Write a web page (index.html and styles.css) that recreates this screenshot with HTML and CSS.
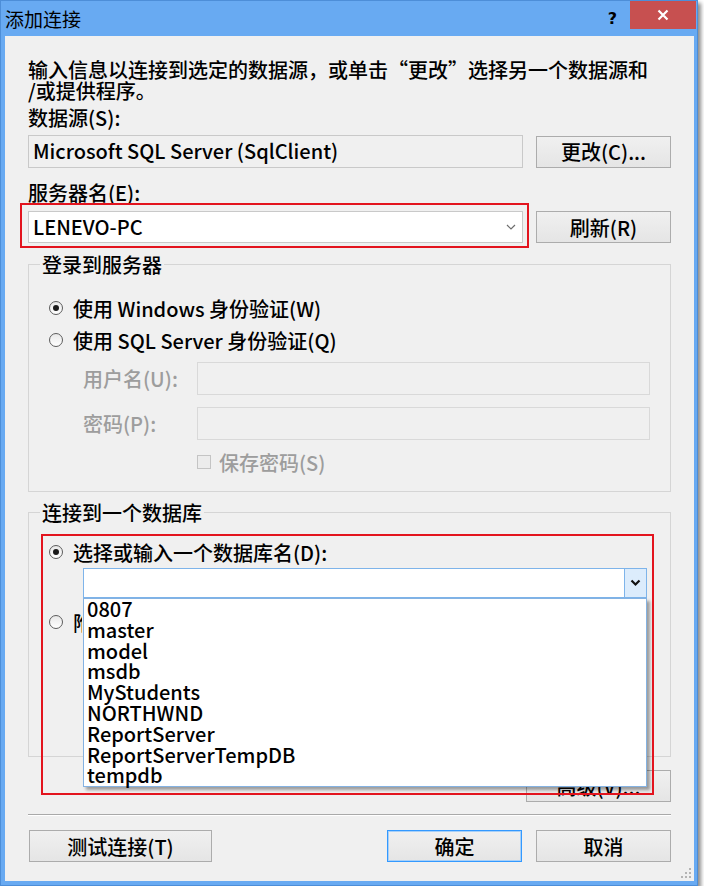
FILE: index.html
```html
<!DOCTYPE html>
<html lang="zh-CN">
<head>
    <meta charset="UTF-8">
    <title>添加连接</title>
    <link rel="stylesheet" href="styles.css">
</head>
<body>

<div class="window">
    <div class="titlebar">
        <span class="title">添加连接</span>
        <span class="help">?</span>
        <span class="close">
            <svg width="12" height="12" viewBox="0 0 12 12"><path d="M1.5 1.5L10.5 10.5M10.5 1.5L1.5 10.5" stroke="#fff" stroke-width="2.2"/></svg>
        </span>
    </div>

    <div class="client">
        <p class="intro">输入信息以连接到选定的数据源，或单击“更改”选择另一个数据源和<br>/或提供程序。</p>

        <div class="label">数据源(S):</div>
        <div class="row">
            <div class="textbox readonly">Microsoft SQL Server (SqlClient)</div>
            <button class="btn">更改(C)...</button>
        </div>

        <div class="label">服务器名(E):</div>
        <div class="row server-row">
            <div class="textbox combo">
                <span>LENEVO-PC</span>
                <svg width="10" height="6" viewBox="0 0 10 6"><path d="M1 1L5 5L9 1" fill="none" stroke="#6d6d6d" stroke-width="1.2"/></svg>
            </div>
            <button class="btn">刷新(R)</button>
            <div class="mark mark-server"></div>
        </div>

        <fieldset class="group login">
            <legend>登录到服务器</legend>
            <div class="option"><span class="radio on"></span>使用 Windows 身份验证(W)</div>
            <div class="option"><span class="radio"></span>使用 SQL Server 身份验证(Q)</div>
            <div class="field">
                <span class="field-label">用户名(U):</span>
                <div class="textbox disabled"></div>
            </div>
            <div class="field second">
                <span class="field-label">密码(P):</span>
                <div class="textbox disabled"></div>
            </div>
            <div class="check-row"><span class="checkbox"></span>保存密码(S)</div>
        </fieldset>

        <fieldset class="group database">
            <legend>连接到一个数据库</legend>
            <div class="option"><span class="radio on"></span>选择或输入一个数据库名(D):</div>
            <div class="db-combo">
                <div class="db-input"></div>
                <div class="db-arrow">
                    <svg width="11" height="8" viewBox="0 0 11 8"><path d="M1.5 1.5L5.5 5.5L9.5 1.5" fill="none" stroke="#111" stroke-width="2.2"/></svg>
                </div>
                <ul class="db-list">
                    <li>0807</li>
                    <li>master</li>
                    <li>model</li>
                    <li>msdb</li>
                    <li>MyStudents</li>
                    <li>NORTHWND</li>
                    <li>ReportServer</li>
                    <li>ReportServerTempDB</li>
                    <li>tempdb</li>
                </ul>
            </div>
            <div class="option attach"><span class="radio"></span><span class="attach-text">附加一个数据库文件(H):</span></div>
        </fieldset>

        <div class="advanced-row">
            <button class="btn advanced">高级(V)...</button>
        </div>

        <div class="separator"></div>

        <div class="footer">
            <button class="btn test">测试连接(T)</button>
            <div class="footer-right">
                <button class="btn default">确定</button>
                <button class="btn">取消</button>
            </div>
        </div>

        <div class="mark mark-db"></div>

        <svg class="grip" width="10" height="10" viewBox="0 0 10 10">
            <rect x="8" y="0" width="2" height="2" fill="#b4b4b4"/>
            <rect x="4" y="4" width="2" height="2" fill="#b4b4b4"/>
            <rect x="8" y="4" width="2" height="2" fill="#b4b4b4"/>
            <rect x="0" y="8" width="2" height="2" fill="#b4b4b4"/>
            <rect x="4" y="8" width="2" height="2" fill="#b4b4b4"/>
            <rect x="8" y="8" width="2" height="2" fill="#b4b4b4"/>
        </svg>
    </div>
</div>

</body>
</html>
```

FILE: styles.css
```css
/* Basic reset */
* {
    margin: 0;
    padding: 0;
    box-sizing: border-box;
}

body {
    background-color: #fff;
    font-family: "Noto Sans CJK SC", "Noto Sans", sans-serif;
    font-size: 20px;
    font-weight: 500;
    color: #000;
}

.window {
    width: 698px;
    background-color: #68aaf2;
    border: 1px solid #4d8ed8;
    box-shadow: 3px 3px 4px rgba(0, 0, 0, 0.45);
    padding-bottom: 4px;
}

/* Title bar */
.titlebar {
    display: flex;
    align-items: center;
    height: 35px;
}

.title {
    flex: 1;
    padding-left: 4px;
    font-size: 19px;
    font-weight: 400;
    line-height: 35px;
}

.help {
    font-family: "DejaVu Sans", sans-serif;
    font-weight: bold;
    font-size: 16px;
    margin-right: 13px;
}

.close {
    align-self: flex-start;
    display: flex;
    align-items: center;
    justify-content: center;
    width: 66px;
    height: 28px;
    background-color: #c75050;
    margin-right: 1px;
}

/* Client area */
.client {
    position: relative;
    margin: 0 3px 0 4px;
    background-color: #f0f0f0;
    padding: 23px 23px 19px 23px;
}

.intro {
    line-height: 21px;
    white-space: nowrap;
}

.label {
    margin-top: 6px;
    line-height: 21px;
}

.row {
    display: flex;
    justify-content: space-between;
    align-items: center;
    margin-top: 7px;
    height: 33px;
}

.server-row {
    position: relative;
    height: 32px;
}

.label + .server-row {
    margin-top: 8px;
}

.row + .label {
    margin-top: 14px;
}

.textbox {
    height: 33px;
    background-color: #fff;
    border: 1px solid #abadb3;
    line-height: 30px;
    padding-left: 4px;
    white-space: nowrap;
}

.textbox.readonly {
    width: 495px;
    background-color: #f0f0f0;
    border-color: #c9c9c9;
}

.combo {
    width: 495px;
    height: 32px;
    display: flex;
    align-items: center;
    justify-content: space-between;
    padding-right: 6px;
    border-color: #c9c9c9;
}

.btn {
    width: 135px;
    height: 32px;
    font-family: inherit;
    font-size: 20px;
    font-weight: 500;
    color: #000;
    background: linear-gradient(#f0f0f0, #e5e5e5);
    border: 1px solid #acacac;
}

/* Annotation boxes */
.mark {
    position: absolute;
    border: 2px solid #e3141e;
    pointer-events: none;
}

.mark-server {
    left: -8px;
    top: -8px;
    width: 509px;
    height: 45px;
}

.mark-db {
    left: 36px;
    top: 498px;
    width: 613px;
    height: 261px;
    z-index: 3;
}

/* Group boxes */
.group {
    margin-top: 11px;
    border: 1px solid #d5d5d5;
    padding: 17px 20px 20px 20px;
    min-width: 0;
}

.group legend {
    margin-left: -9px;
    padding: 0 2px;
    line-height: 21px;
}

.option {
    display: flex;
    align-items: center;
    height: 32px;
    white-space: nowrap;
}

.radio {
    position: relative;
    flex: none;
    width: 14px;
    height: 14px;
    border-radius: 50%;
    border: 1px solid #5d5d5d;
    background: linear-gradient(#e8e8e8, #fff);
    margin-right: 10px;
}

.radio.on::after {
    content: "";
    position: absolute;
    left: 3px;
    top: 3px;
    width: 6px;
    height: 6px;
    border-radius: 50%;
    background-color: #1a1a1a;
}

.field {
    display: flex;
    align-items: center;
    margin-top: 6px;
    padding-left: 34px;
}

.field.second {
    margin-top: 12px;
}

.field-label {
    width: 114px;
    color: #9d9d9d;
}

.textbox.disabled {
    width: 453px;
    background-color: #f0f0f0;
    border-color: #d9d9d9;
}

.check-row {
    display: flex;
    align-items: center;
    height: 18px;
    margin-top: 13px;
    padding-left: 148px;
    color: #9d9d9d;
}

.checkbox {
    width: 14px;
    height: 14px;
    border: 1px solid #c4c4c4;
    background-color: #ececec;
    margin-right: 8px;
}

.database {
    margin-top: 10px;
    padding: 13px 20px 118px 20px;
}

.db-combo {
    position: relative;
    display: flex;
    margin-left: 34px;
    width: 564px;
    height: 30px;
    border: 1px solid #7eb4ea;
    background-color: #fff;
}

.db-input {
    flex: 1;
}

.db-arrow {
    width: 22px;
    display: flex;
    align-items: center;
    justify-content: center;
    background-color: #dcecfc;
    border-left: 1px solid #7eb4ea;
}

.db-list {
    position: absolute;
    left: -1px;
    top: 29px;
    width: 564px;
    height: 189px;
    list-style: none;
    background-color: #fff;
    border: 1px solid #84b2e2;
    box-shadow: 3px 3px 3px rgba(0, 0, 0, 0.35);
    padding-left: 3px;
    z-index: 2;
}

.db-list li {
    line-height: 20.8px;
}

.attach {
    margin-top: 8px;
}

/* mostly covered by the open list */
.attach-text {
    display: block;
    width: 9px;
    overflow: hidden;
}

.advanced-row {
    display: flex;
    justify-content: flex-end;
    margin-top: 13px;
}

.advanced {
    width: 145px;
}

.separator {
    margin-top: 12px;
    border-top: 1px solid #a9a9a9;
    border-bottom: 1px solid #fff;
}

.footer {
    display: flex;
    justify-content: space-between;
    margin-top: 14px;
}

.footer-right {
    display: flex;
    gap: 14px;
}

.test {
    width: 183px;
    margin-left: 1px;
}

.default {
    border-color: #3399ff;
    box-shadow: inset 0 0 0 1px #a8d0f8;
}

.grip {
    position: absolute;
    right: 3px;
    bottom: 3px;
}
```
